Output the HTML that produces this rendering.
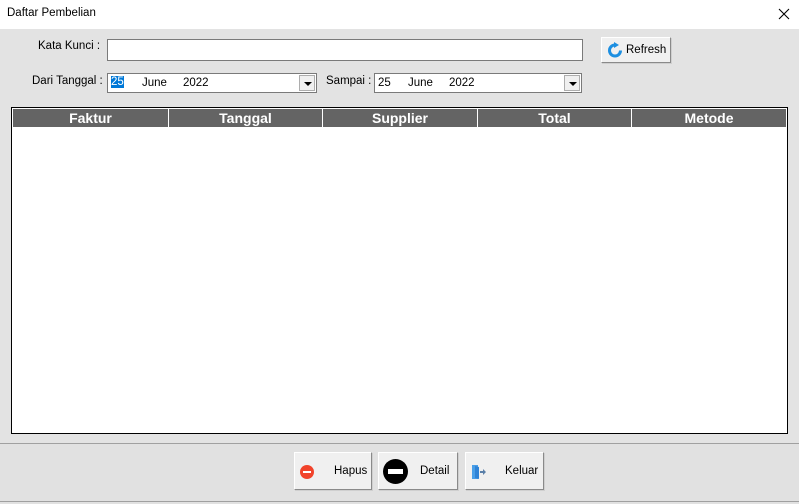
<!DOCTYPE html><html><head><style>
body{margin:0;width:799px;height:504px;background:#e3e3e3;font-family:"Liberation Sans",sans-serif;font-size:11.5px;position:relative;overflow:hidden;color:#000}
.a{position:absolute}
.btn{position:absolute;background:#f0f0f0;border:1px solid #fff;border-right-color:#8a8a8a;border-bottom-color:#8a8a8a;box-shadow:1px 1px 0 #cfcfcf;box-sizing:border-box}
.dd{position:absolute;background:#fff;border:1px solid #7a7a7a;box-sizing:border-box;height:20px}
.arr{position:absolute;right:1px;top:1px;width:16px;height:16px;background:#f0f0f0;border:1px solid #adadad;box-sizing:border-box}
.arr:after{content:"";position:absolute;left:4px;top:6px;border-left:4px solid transparent;border-right:4px solid transparent;border-top:4px solid #000}
th{color:#fff;font-weight:bold;font-size:14px;text-align:center;border-right:1px solid #fff;padding:0;height:18px}
</style></head><body>
<div class="a" style="left:0;top:0;width:799px;height:29px;background:#fff"></div>
<div class="a" style="left:7px;top:7px">Daftar Pembelian</div>
<svg class="a" style="left:778px;top:8px" width="12" height="12" viewBox="0 0 12 12"><path d="M1 1L11 11M11 1L1 11" stroke="#000" stroke-width="1.1"/></svg>
<div class="a" style="left:38px;top:40px">Kata Kunci :</div>
<div class="a" style="left:107px;top:39px;width:476px;height:22px;background:#fff;border:1px solid #7a7a7a;box-sizing:border-box"></div>
<div class="btn" style="left:601px;top:37px;width:70px;height:26px"></div>
<svg class="a" style="left:607px;top:42px" width="16" height="16" viewBox="0 0 16 16"><path d="M8 3a5.5 5.5 0 1 0 5.5 5.5" fill="none" stroke="#1d8fe1" stroke-width="3"/><path d="M7 0l5 3-5 3z" fill="#1d8fe1"/></svg>
<div class="a" style="left:626px;top:44px">Refresh</div>
<div class="a" style="left:32px;top:75px">Dari Tanggal :</div>
<div class="dd" style="left:107px;top:73px;width:210px"><span class="a" style="left:3px;top:2px;background:#0078d7;color:#fff">25</span><span class="a" style="left:34px;top:3px">June</span><span class="a" style="left:75px;top:3px">2022</span><div class="arr"></div></div>
<div class="a" style="left:326px;top:75px">Sampai :</div>
<div class="dd" style="left:374px;top:73px;width:208px"><span class="a" style="left:3px;top:3px">25</span><span class="a" style="left:33px;top:3px">June</span><span class="a" style="left:74px;top:3px">2022</span><div class="arr"></div></div>
<div class="a" style="left:11px;top:107px;width:777px;height:327px;background:#fff;border:1px solid #000;box-sizing:border-box">
<table style="position:absolute;left:1px;top:1px;width:773px;border-collapse:collapse;background:#646464"><tr><th style="width:155px">Faktur</th><th style="width:153px">Tanggal</th><th style="width:154px">Supplier</th><th style="width:153px">Total</th><th style="border:0">Metode</th></tr></table></div>
<div class="a" style="left:0;top:443px;width:799px;height:1px;background:#a0a0a0"></div>
<div class="a" style="left:0;top:444px;width:799px;height:60px;background:#e1e1e1"></div>
<div class="a" style="left:0;top:501px;width:799px;height:1px;background:#a0a0a0"></div>
<div class="btn" style="left:294px;top:452px;width:78px;height:38px"></div>
<div class="a" style="left:300px;top:465px;width:14px;height:14px;border-radius:50%;background:#f1432b"></div><div class="a" style="left:303px;top:471px;width:8px;height:2px;background:#fff"></div>
<div class="a" style="left:334px;top:465px">Hapus</div>
<div class="btn" style="left:378px;top:452px;width:80px;height:38px"></div>
<div class="a" style="left:383px;top:459px;width:25px;height:25px;border-radius:50%;background:#000"></div><div class="a" style="left:388px;top:469px;width:15px;height:5px;background:#fff"></div>
<div class="a" style="left:420px;top:465px">Detail</div>
<div class="btn" style="left:465px;top:452px;width:79px;height:38px"></div>
<svg class="a" style="left:471px;top:464px" width="16" height="16" viewBox="0 0 16 16"><path d="M1 1h6v14H1z" fill="#4a9fe8"/><path d="M4 2l4 1v12l-4-1z" fill="#2f83d6"/><path d="M9 7h3V5l3 3-3 3V9H9z" fill="#5a7fa8"/></svg>
<div class="a" style="left:505px;top:465px">Keluar</div>
</body></html>
